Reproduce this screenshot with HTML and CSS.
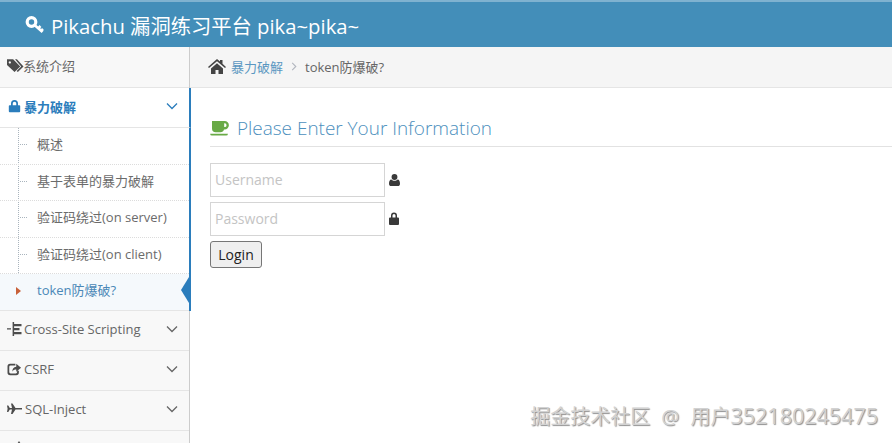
FILE: index.html
```html
<!DOCTYPE html>
<html lang="en">
<head>
  <meta charset="UTF-8" />
  <title>Pikachu</title>
  <link rel="stylesheet" href="styles.css">
</head>
<body>
  <div class="navbar">
    <svg class="key" viewBox="0 0 20 20"><circle class="key-ring" cx="6.500" cy="7" r="4.300"/><path class="key-shaft" d="M9.500 10l8 7M13 13.500l2.500-2.500M16 16l2-2"/></svg>
    <span>Pikachu 漏洞练习平台 pika~pika~</span>
  </div>
  <div class="layout">
    <ul class="sidebar">
      <li class="item first">
        <svg class="ico tag" viewBox="0 0 18 15"><path d="M0 1h6.500l7.500 7.500-6 6L0 7zM3 3a1.200 1.200 0 1 0 .01 0zM8.500 1h2l7 7.500-6 6-1.300-1.200 4.800-4.800z" fill-rule="evenodd"/></svg>
        <span>系统介绍</span>
      </li>
      <li class="item open">
        <svg class="ico" viewBox="0 0 14 16"><path d="M3 7V5a4 4 0 0 1 8 0v2h1.500a1 1 0 0 1 1 1v6a1 1 0 0 1-1 1h-11a1 1 0 0 1-1-1V8a1 1 0 0 1 1-1zM5 7h4V5a2 2 0 0 0-4 0z" fill-rule="evenodd"/></svg>
        <span>暴力破解</span>
        <svg class="chev" viewBox="0 0 12 8"><path d="M1 1.500l5 5 5-5"/></svg>
      </li>
      <li>
        <ul class="submenu">
          <li>概述</li>
          <li>基于表单的暴力破解</li>
          <li>验证码绕过(on server)</li>
          <li>验证码绕过(on client)</li>
          <li class="active">token防爆破?</li>
        </ul>
      </li>
      <li class="item">
        <svg class="ico" viewBox="0 0 15 14"><path d="M0 6.200h4v1.400H0zM5.600 0h1.500v14H5.600zM7 2h7.500v2.200H7zM7 6h5.500v2.200H7zM7 10h7.500v2.200H7z"/></svg>
        <span>Cross-Site Scripting</span>
        <svg class="chev" viewBox="0 0 12 8"><path d="M1 1.500l5 5 5-5"/></svg>
      </li>
      <li class="item">
        <svg class="ico" viewBox="0 0 16 16"><path d="M3 2h6v2H3.500A1.500 1.500 0 0 0 2 5.500v6A1.500 1.500 0 0 0 3.500 13h6a1.500 1.500 0 0 0 1.500-1.500V10h2v2a3 3 0 0 1-3 3H3a3 3 0 0 1-3-3V5a3 3 0 0 1 3-3zM10 2l5.500 4.500L10 11V8.500c-2 0-3.500.5-4.500 2.500 0-3 1.500-5.500 4.500-5.500z"/></svg>
        <span>CSRF</span>
        <svg class="chev" viewBox="0 0 12 8"><path d="M1 1.500l5 5 5-5"/></svg>
      </li>
      <li class="item">
        <svg class="ico" viewBox="0 0 15 14"><path d="M0 3.500h1.300l1.500 2.500h2.200L4 1.500h1.500L8.500 6h6.500v1.500H8.500L5.500 12H4l1-4.500H2.800L1.300 10H0l.6-3.200z"/></svg>
        <span class="sql">SQL-Inject</span>
        <svg class="chev" viewBox="0 0 12 8"><path d="M1 1.500l5 5 5-5"/></svg>
      </li>
      <li class="item last"><svg class="stub" viewBox="0 0 6 3"><path d="M3 0l2 3H1z"/></svg></li>
    </ul>
    <div class="main">
      <div class="breadcrumbs">
        <svg class="home" viewBox="0 0 18 15"><path d="M9 0l3 2.600V1h2.500v3.800L18 8l-1 1.100L9 2.200 1 9.100 0 8zM3 9.500L9 4.300l6 5.200V15h-4.500v-4h-3v4H3z"/></svg>
        <a class="crumb">暴力破解</a>
        <svg class="sep" viewBox="0 0 6 10"><path d="M1 1l4 4-4 4"/></svg>
        <span>token防爆破?</span>
      </div>
      <div class="content">
        <div class="page-header">
          <svg class="coffee" viewBox="0 0 20 16"><path d="M2 0h13.500a4 4 0 0 1 0 9h-.7A4 4 0 0 1 11 12H6a4 4 0 0 1-4-4zM15 2.500V6.500h.5a2 2 0 0 0 0-4zM0 13.500h19a2 2 0 0 1-2 2H2a2 2 0 0 1-2-2z" fill-rule="evenodd"/></svg>
          <h2>Please Enter Your Information</h2>
        </div>
        <form class="login">
          <div class="field">
            <input type="text" placeholder="Username">
            <svg class="fld-ico" viewBox="0 0 12 13"><path d="M6 0a3.200 3.200 0 1 1 0 6.400A3.200 3.200 0 0 1 6 0zM2.500 6c1 1 2.200 1.400 3.500 1.400S8.500 7 9.500 6c1.500.2 2.500 1.800 2.500 4.500 0 1.500-1 2.500-2.200 2.500H2.200C1 13 0 12 0 10.500 0 7.800 1 6.200 2.500 6z"/></svg>
          </div>
          <div class="field">
            <input type="password" placeholder="Password">
            <svg class="fld-ico lock" viewBox="0 0 10 13"><path d="M2 5.500V3.500a3 3 0 0 1 6 0v2h1a1 1 0 0 1 1 1V12a1 1 0 0 1-1 1H1a1 1 0 0 1-1-1V6.500a1 1 0 0 1 1-1zM3.500 5.500h3v-2a1.500 1.500 0 0 0-3 0z" fill-rule="evenodd"/></svg>
          </div>
          <button type="button" class="submit">Login</button>
        </form>
      </div>
    </div>
  </div>
  <div class="watermark">掘金技术社区 @ 用户<span class="num">352180245475</span></div>
</body>
</html>
```

FILE: styles.css
```css
* {
  box-sizing: border-box;
}
html, body {
  height: 100%;
}
body {
  margin: 0;
  overflow: hidden;
  position: relative;
  font-family: "Open Sans", "Noto Sans CJK SC", sans-serif;
  font-size: 13px;
  color: #393939;
  background: #fff;
}
ul {
  list-style: none;
  margin: 0;
  padding: 0;
}

.navbar {
  height: 47px;
  padding: 0 0 0 25px;
  display: flex;
  align-items: center;
  gap: 6px;
  background: #438eb9;
  border-top: 2px solid #7fb2d0;
  color: #fff;
  font-size: 20.300px;
}
.key {
  width: 20px;
  height: 20px;
  fill: none;
  stroke: #fff;
}
.key-ring {
  stroke-width: 3.200;
}
.key-shaft {
  stroke-width: 2.600;
}

.layout {
  display: flex;
  height: 396px;
}

.sidebar {
  width: 190px;
  height: 396px;
  flex: none;
  background: #f2f2f2;
  border-right: 1px solid #ccc;
}
.item {
  height: 40px;
  padding: 0 10px 2px 7px;
  display: flex;
  align-items: center;
  background: #f8f8f8;
  border-bottom: 1px solid #e5e5e5;
  color: #666;
}
.item.first {
  height: 41px;
  padding-bottom: 3px;
}
.item.last {
  height: 12px;
  padding: 10px 0 0 16px;
  align-items: flex-start;
  border-bottom: 0;
}
.stub {
  width: 6px;
  height: 2px;
  fill: #555;
}
.item span {
  margin-left: 2px;
}
.item .sql {
  margin-left: 3px;
}
.ico {
  width: 15px;
  height: 14px;
  fill: #4c4c4c;
  flex: none;
}
.ico.tag {
  width: 17px;
  height: 15px;
  margin-right: -3px;
}
.chev {
  width: 12px;
  height: 8px;
  margin-left: auto;
  margin-right: 1px;
  fill: none;
  stroke: #666;
  stroke-width: 1.300;
}
.item.open {
  position: relative;
  margin-right: -2px;
  padding: 0 10px 3px 7px;
  background: #fff;
  color: #2b7dbc;
  font-weight: 700;
  border-right: 2px solid #2b7dbc;
}
.item.open .ico {
  fill: #2b7dbc;
}
.item.open .chev {
  stroke: #2b7dbc;
}

.submenu {
  position: relative;
  background: #fff;
  margin-right: -2px;
  border-right: 2px solid #2b7dbc;
}
.submenu::before {
  content: "";
  position: absolute;
  left: 18px;
  top: 0;
  bottom: 0;
  border-left: 1px dotted #a9b4bd;
}
.submenu li {
  position: relative;
  height: 36.600px;
  padding-left: 37px;
  line-height: 32px;
  border-bottom: 1px dotted #dcdcdc;
  color: #6b6b6b;
}
.submenu li::before {
  content: "";
  position: absolute;
  left: 20px;
  top: 16px;
  width: 7px;
  border-top: 1px dotted #a9b4bd;
}
.submenu li.active {
  background: #f5f9fc;
  color: #4b88b7;
  border-bottom: 1px solid #e5e5e5;
}
.submenu li.active::before {
  left: 16px;
  top: 13px;
  width: 0;
  border-top: 4px solid transparent;
  border-bottom: 4px solid transparent;
  border-left: 5px solid #c86139;
}
.submenu li.active::after {
  content: "";
  position: absolute;
  right: 0;
  top: 3px;
  border-top: 13px solid transparent;
  border-bottom: 13px solid transparent;
  border-right: 8px solid #2b7dbc;
}

.main {
  flex: 1;
  min-width: 0;
}
.breadcrumbs {
  height: 41px;
  padding: 0 0 2px 18px;
  display: flex;
  align-items: center;
  background: #f5f5f5;
  border-bottom: 1px solid #e5e5e5;
  color: #666;
}
.home {
  width: 18px;
  height: 15px;
  fill: #444;
}
.crumb {
  margin-left: 5px;
  color: #5b97c1;
}
.sep {
  width: 6px;
  height: 9px;
  margin: 1px 8px 0 8px;
  fill: none;
  stroke: #b2b6bf;
  stroke-width: 1.200;
}

.content {
  padding: 0 0 0 20px;
}
.page-header {
  height: 59px;
  padding: 21px 0 0;
  display: flex;
  align-items: center;
  gap: 8px;
  border-bottom: 1px solid #e2e2e2;
}
.coffee {
  width: 19px;
  height: 15px;
  margin-top: 1px;
  fill: #69aa46;
  flex: none;
}
.page-header h2 {
  margin: 0;
  font-size: 18.950px;
  font-weight: 300;
  color: #4c8fbd;
}

.login {
  margin-top: 16px;
}
.field {
  display: flex;
  align-items: center;
  gap: 4px;
  margin-bottom: 5px;
}
.field input {
  width: 175px;
  height: 34px;
  padding: 0 4px 2px;
  font-family: inherit;
  font-size: 14px;
  border: 1px solid #d5d5d5;
  background: #fff;
  outline: none;
}
.field input::placeholder {
  color: #c4c4c4;
}
.fld-ico {
  width: 11px;
  height: 12px;
  fill: #393939;
}
.fld-ico.lock {
  width: 10px;
  height: 13px;
  margin-bottom: 2px;
}
.submit {
  width: 52px;
  height: 27px;
  margin-top: 0;
  padding: 0;
  font-family: inherit;
  font-size: 14px;
  color: #222;
  background: #efefef;
  border: 1px solid #767676;
  border-radius: 3px;
}

.watermark {
  position: absolute;
  right: 14px;
  bottom: 13px;
  font-size: 20px;
  font-weight: 400;
  word-spacing: 6px;
  color: #d2d2d2;
  text-shadow: 1px 1px 1px #8f8f8f;
  white-space: nowrap;
}
.num {
  font-size: 21.500px;
}
```
